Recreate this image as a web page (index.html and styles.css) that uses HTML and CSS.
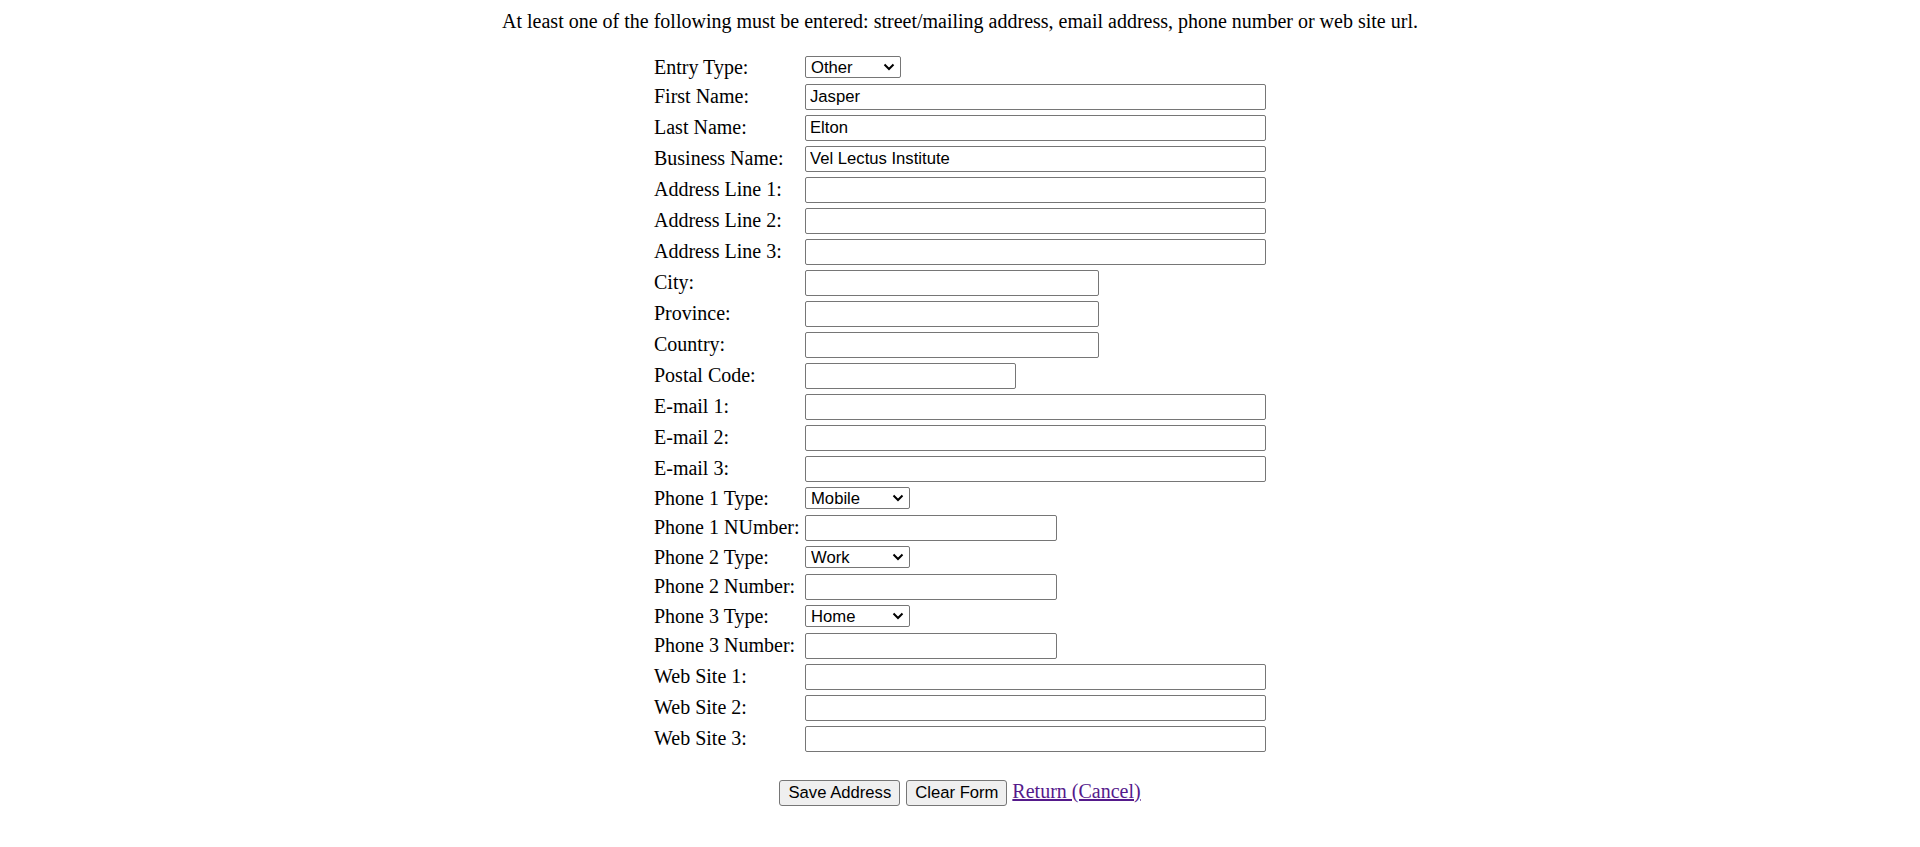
FILE: index.html
```html
<!DOCTYPE html>
<html>
<head>
<meta charset="utf-8">
<title>Address Entry</title>
<link rel="stylesheet" href="styles.css">
</head>
<body>
<div class="page">
  <p class="notice">At least one of the following must be entered: street/mailing address, email address, phone number or web site url.</p>
  <form class="entry-form">
    <div class="grid">
      <label class="lbl sel-row">Entry Type:</label>
      <div class="ctl sel-row"><select class="sel sel-entry"><option>Other</option><option>Personal</option><option>Business</option></select></div>

      <label class="lbl">First Name:</label>
      <div class="ctl"><input class="txt txt-long" type="text" value="Jasper"></div>

      <label class="lbl">Last Name:</label>
      <div class="ctl"><input class="txt txt-long" type="text" value="Elton"></div>

      <label class="lbl">Business Name:</label>
      <div class="ctl"><input class="txt txt-long" type="text" value="Vel Lectus Institute"></div>

      <label class="lbl">Address Line 1:</label>
      <div class="ctl"><input class="txt txt-long" type="text"></div>

      <label class="lbl">Address Line 2:</label>
      <div class="ctl"><input class="txt txt-long" type="text"></div>

      <label class="lbl">Address Line 3:</label>
      <div class="ctl"><input class="txt txt-long" type="text"></div>

      <label class="lbl">City:</label>
      <div class="ctl"><input class="txt txt-mid" type="text"></div>

      <label class="lbl">Province:</label>
      <div class="ctl"><input class="txt txt-mid" type="text"></div>

      <label class="lbl">Country:</label>
      <div class="ctl"><input class="txt txt-mid" type="text"></div>

      <label class="lbl">Postal Code:</label>
      <div class="ctl"><input class="txt txt-short" type="text"></div>

      <label class="lbl">E-mail 1:</label>
      <div class="ctl"><input class="txt txt-long" type="text"></div>

      <label class="lbl">E-mail 2:</label>
      <div class="ctl"><input class="txt txt-long" type="text"></div>

      <label class="lbl">E-mail 3:</label>
      <div class="ctl"><input class="txt txt-long" type="text"></div>

      <label class="lbl sel-row">Phone 1 Type:</label>
      <div class="ctl sel-row"><select class="sel sel-phone"><option>Mobile</option><option>Work</option><option>Home</option></select></div>

      <label class="lbl">Phone 1 NUmber:</label>
      <div class="ctl"><input class="txt txt-phone" type="text"></div>

      <label class="lbl sel-row">Phone 2 Type:</label>
      <div class="ctl sel-row"><select class="sel sel-phone"><option>Work</option><option>Mobile</option><option>Home</option></select></div>

      <label class="lbl">Phone 2 Number:</label>
      <div class="ctl"><input class="txt txt-phone" type="text"></div>

      <label class="lbl sel-row">Phone 3 Type:</label>
      <div class="ctl sel-row"><select class="sel sel-phone"><option>Home</option><option>Mobile</option><option>Work</option></select></div>

      <label class="lbl">Phone 3 Number:</label>
      <div class="ctl"><input class="txt txt-phone" type="text"></div>

      <label class="lbl">Web Site 1:</label>
      <div class="ctl"><input class="txt txt-long" type="text"></div>

      <label class="lbl">Web Site 2:</label>
      <div class="ctl"><input class="txt txt-long" type="text"></div>

      <label class="lbl">Web Site 3:</label>
      <div class="ctl"><input class="txt txt-long" type="text"></div>
    </div>
    <div class="actions">
      <button type="button" class="btn btn-save">Save Address</button>
      <button type="reset" class="btn btn-clear">Clear Form</button>
      <a class="back-link" href="#">Return (Cancel)</a>
    </div>
  </form>
</div>
</body>
</html>
```

FILE: styles.css
```css
html, body {
  margin: 0;
  padding: 0;
  background: #ffffff;
}

body {
  font-family: "Liberation Serif", "Times New Roman", serif;
  font-size: 20px;
  color: #000000;
}

.page {
  padding-top: 10px;
}

.notice {
  margin: 0;
  text-align: center;
  line-height: 23px;
  font-size: 20px;
}

.entry-form {
  margin: 20px auto 0;
  width: 612px;
}

.grid {
  display: grid;
  grid-template-columns: 151px 461px;
  grid-auto-rows: auto;
}

.lbl {
  display: flex;
  align-items: center;
  height: 31px;
  line-height: 23px;
  white-space: nowrap;
}

.ctl {
  display: flex;
  align-items: center;
  height: 31px;
}

.lbl.sel-row,
.ctl.sel-row {
  height: 28px;
}

.txt {
  box-sizing: border-box;
  height: 26px;
  margin: 0;
  padding: 0 3px 0 4px;
  border: 1px solid #767676;
  border-radius: 2px;
  font-family: "Liberation Sans", Arial, sans-serif;
  font-size: 16.67px;
  color: #000000;
  background: #ffffff;
  outline: none;
}

.txt-long { width: 461px; }
.txt-mid { width: 294px; }
.txt-short { width: 211px; }
.txt-phone { width: 252px; }

.sel {
  box-sizing: border-box;
  height: 22px;
  margin: 0;
  padding: 0 0 0 5px;
  border: 1px solid #767676;
  border-radius: 2px;
  font-family: "Liberation Sans", Arial, sans-serif;
  font-size: 16.67px;
  color: #000000;
  -webkit-appearance: none;
  appearance: none;
  background-color: #ffffff;
  background-image: url("data:image/svg+xml;utf8,<svg xmlns='http://www.w3.org/2000/svg' width='12' height='8' viewBox='0 0 12 8'><path d='M1.5 1.5 L6 6 L10.5 1.5' fill='none' stroke='black' stroke-width='2'/></svg>");
  background-repeat: no-repeat;
  background-position: right 5px center;
  background-size: 12px 8px;
}

.sel-entry { width: 96px; }
.sel-phone { width: 105px; }

.actions {
  display: flex;
  justify-content: center;
  align-items: baseline;
  margin-top: 26px;
}

.btn {
  box-sizing: border-box;
  height: 26px;
  padding: 0;
  margin: 0;
  border: 1px solid #767676;
  border-radius: 3px;
  background: #efefef;
  font-family: "Liberation Sans", Arial, sans-serif;
  font-size: 16.67px;
  color: #000000;
  text-align: center;
}

.btn-save {
  width: 121px;
  margin-right: 6px;
}

.btn-clear {
  width: 101px;
  margin-right: 5px;
}

.back-link {
  color: #551a8b;
  text-decoration: underline;
  font-size: 20px;
}
```
